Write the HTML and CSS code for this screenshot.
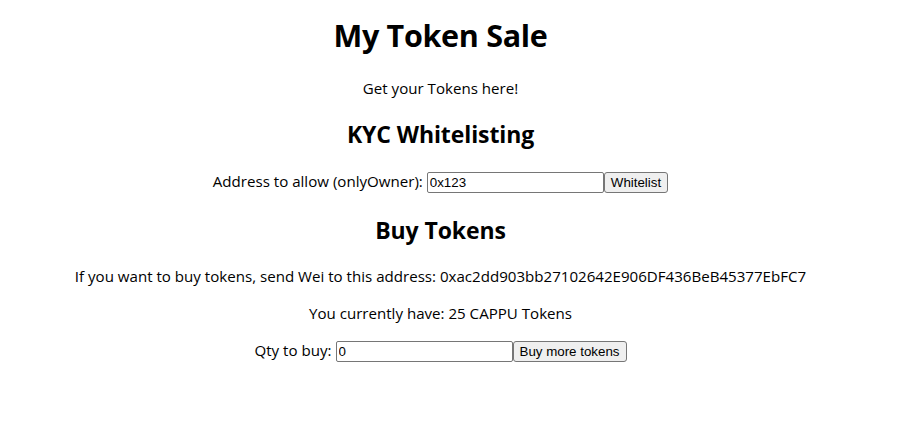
FILE: index.html
```html
<!DOCTYPE html>
<html lang="en">
<head>
<meta charset="utf-8">
<title>My Token Sale</title>
<link rel="stylesheet" href="styles.css">
</head>
<body>
<div class="app">
  <h1 class="title">My Token Sale</h1>
  <p class="text intro">Get your Tokens here!</p>
  <h2 class="subtitle kyc">KYC Whitelisting</h2>
  <div class="form-row row-kyc">
    <label class="label" for="addr">Address to allow (onlyOwner):</label>
    <input class="field" id="addr" type="text" value="0x123">
    <button class="btn" type="button">Whitelist</button>
  </div>
  <h2 class="subtitle buy">Buy Tokens</h2>
  <p class="text send">If you want to buy tokens, send Wei to this address: 0xac2dd903bb27102642E906DF436BeB45377EbFC7</p>
  <p class="text have">You currently have: 25 CAPPU Tokens</p>
  <div class="form-row row-buy">
    <label class="label" for="qty">Qty to buy:</label>
    <input class="field" id="qty" type="text" value="0">
    <button class="btn" type="button">Buy more tokens</button>
  </div>
</div>
</body>
</html>
```
FILE: styles.css
```css
html, body {
  margin: 0;
  padding: 0;
  background: #ffffff;
}

.app {
  text-align: center;
  color: #000000;
  font-family: "Open Sans", "Noto Sans", sans-serif;
  padding-top: 15px;
  padding-right: 27px;
}

.title {
  margin: 0;
  font-size: 30.5px;
  line-height: 40px;
  font-weight: 700;
  letter-spacing: -0.3px;
}

.subtitle {
  margin: 0;
  font-size: 23px;
  line-height: 32px;
  font-weight: 700;
  letter-spacing: -0.1px;
}

.text {
  margin: 0;
  font-size: 15.1px;
  line-height: 21px;
}

.intro { margin-top: 23px; }
.kyc { margin-top: 19px; }
.row-kyc { margin-top: 22px; }
.buy { margin-top: 21px; }
.send { margin-top: 20px; }
.have { margin-top: 16px; }
.row-buy { margin-top: 17px; }

.form-row {
  display: flex;
  justify-content: center;
  align-items: baseline;
}

.label {
  font-size: 15.1px;
  line-height: 17px;
  margin-right: 4px;
}

.field {
  box-sizing: border-box;
  width: 177px;
  height: 21px;
  margin: 0;
  padding: 1px 2px;
  border: 1px solid #767676;
  border-radius: 2px;
  background: #ffffff;
  color: #000000;
  font-family: "Liberation Sans", Arial, sans-serif;
  font-size: 13.333px;
}

.btn {
  box-sizing: border-box;
  height: 21px;
  margin: 0;
  padding: 1px 6px;
  border: 1px solid #767676;
  border-radius: 3px;
  background: #efefef;
  color: #000000;
  font-family: "Liberation Sans", Arial, sans-serif;
  font-size: 13.333px;
}
```
